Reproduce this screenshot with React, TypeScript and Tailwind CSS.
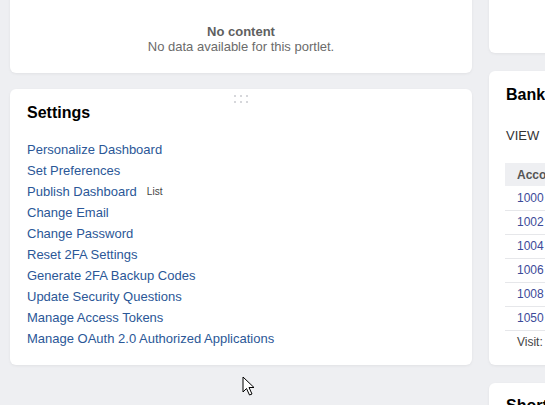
const settingsLinks = [
  "Personalize Dashboard",
  "Set Preferences",
  "Publish Dashboard",
  "Change Email",
  "Change Password",
  "Reset 2FA Settings",
  "Generate 2FA Backup Codes",
  "Update Security Questions",
  "Manage Access Tokens",
  "Manage OAuth 2.0 Authorized Applications",
];

const accounts = ["1000", "1002", "1004", "1006", "1008", "1050"];

function DragHandle() {
  return (
    <div className="absolute left-1/2 top-[6px] -translate-x-1/2 grid grid-cols-3 gap-x-[4px] gap-y-[4px]">
      {Array.from({ length: 6 }).map((_, i) => (
        <span key={i} className="block size-[2px] bg-[#d6d7db]" />
      ))}
    </div>
  );
}

function Cursor() {
  return (
    <svg
      className="absolute left-[242px] top-[376px]"
      width="14"
      height="21"
      viewBox="0 0 14 21"
    >
      <path
        d="M1 1 L1 16 L4.5 12.5 L7.5 19 L10 18 L7 11.5 L12 11.5 Z"
        fill="#fff"
        stroke="#000"
        strokeWidth="1"
        strokeLinejoin="round"
      />
    </svg>
  );
}

export default function App() {
  return (
    <div className="relative h-[405px] w-[545px] overflow-hidden bg-[#eeeff2] font-['Liberation_Sans',Arial,sans-serif]">
      <div className="-mt-[40px] flex gap-[17px] pl-[10px]">
        {/* left column */}
        <div className="flex w-[462px] shrink-0 flex-col gap-[16px]">
          <div className="h-[113px] rounded-[6px] bg-white pt-[64px] text-center shadow-[0_1px_3px_rgba(0,0,0,0.06)]">
            <p className="text-[13px] font-bold leading-[15px] text-[#5f5f5f]">No content</p>
            <p className="text-[13px] leading-[15px] text-[#6b6b6b]">No data available for this portlet.</p>
          </div>

          <div className="relative h-[276px] rounded-[6px] bg-white px-[17px] pt-[15px] shadow-[0_1px_3px_rgba(0,0,0,0.06)]">
            <DragHandle />
            <h2 className="text-[16px] font-bold leading-[18px] text-black">Settings</h2>
            <ul className="mt-[17px] flex flex-col">
              {settingsLinks.map((label) => (
                <li key={label} className="flex items-center text-[13px] leading-[21px]">
                  <a className="text-[#2b5797]">{label}</a>
                  {label === "Publish Dashboard" && (
                    <span className="ml-[10px] text-[10px] text-[#444]">List</span>
                  )}
                </li>
              ))}
            </ul>
          </div>
        </div>

        {/* right column */}
        <div className="flex w-[300px] shrink-0 flex-col gap-[18px]">
          <div className="h-[93px] rounded-[6px] bg-white shadow-[0_1px_3px_rgba(0,0,0,0.06)]" />

          <div className="h-[294px] rounded-[6px] bg-white pt-[15px] shadow-[0_1px_3px_rgba(0,0,0,0.06)]">
            <h2 className="px-[17px] text-[16px] font-bold leading-[18px] text-black">Bank</h2>
            <p className="mt-[24px] px-[17px] text-[13px] leading-[16px] text-[#333]">VIEW</p>
            <table className="ml-[16px] mt-[19px] w-[270px] border-collapse text-left">
              <thead>
                <tr className="h-[23px] bg-[#eeeff2]">
                  <th className="pl-[12px] text-[12px] font-bold text-[#555]">Account</th>
                </tr>
              </thead>
              <tbody>
                {accounts.map((n) => (
                  <tr key={n} className="h-[24px] border-b border-[#e6e7ea]">
                    <td className="pl-[12px] text-[12px] text-[#3c4a99]">{n}</td>
                  </tr>
                ))}
                <tr className="h-[24px]">
                  <td className="pl-[12px] text-[12px] text-[#444]">Visit:</td>
                </tr>
              </tbody>
            </table>
          </div>

          <div className="h-[80px] rounded-[6px] bg-white px-[17px] pt-[14px] shadow-[0_1px_3px_rgba(0,0,0,0.06)]">
            <h2 className="text-[16px] font-bold leading-[18px] text-black">Shortcuts</h2>
          </div>
        </div>
      </div>
      <Cursor />
    </div>
  );
}
